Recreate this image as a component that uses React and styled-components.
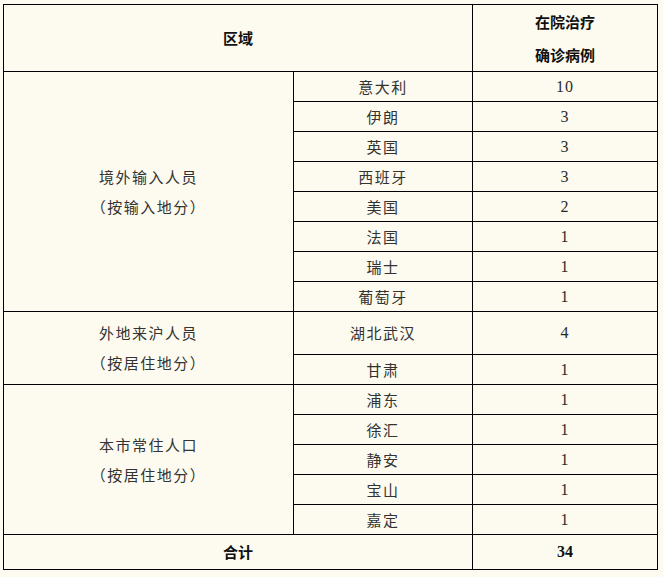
import React from 'react';
import styled, { createGlobalStyle } from 'styled-components';

const GlobalStyle = createGlobalStyle`
  html, body {
    margin: 0;
    padding: 0;
    background: #fdfbef;
  }
  body {
    font-family: "Noto Sans CJK SC", "Noto Sans", sans-serif;
    color: #333;
  }
`;

const groups = [
  {
    name: ['境外输入人员', '（按输入地分）'],
    rows: [
      ['意大利', 10],
      ['伊朗', 3],
      ['英国', 3],
      ['西班牙', 3],
      ['美国', 2],
      ['法国', 1],
      ['瑞士', 1],
      ['葡萄牙', 1],
    ],
  },
  {
    name: ['外地来沪人员', '（按居住地分）'],
    rows: [
      ['湖北武汉', 4, 43],
      ['甘肃', 1],
    ],
  },
  {
    name: ['本市常住人口', '（按居住地分）'],
    rows: [
      ['浦东', 1],
      ['徐汇', 1],
      ['静安', 1],
      ['宝山', 1],
      ['嘉定', 1],
    ],
  },
];

const App = () => {
  return (
    <>
      <GlobalStyle />
      <Wrap>
        <Table>
          <colgroup>
            <col style={{ width: 290 }} />
            <col style={{ width: 179 }} />
            <col style={{ width: 185 }} />
          </colgroup>
          <thead>
            <tr>
              <HeadCell colSpan={2} $h={67}>区域</HeadCell>
              <HeadCell $h={67}>
                <Lines $lh={33}>
                  <span>在院治疗</span>
                  <span>确诊病例</span>
                </Lines>
              </HeadCell>
            </tr>
          </thead>
          <tbody>
            {groups.map(g =>
              g.rows.map(([place, count, h], i) => (
                <tr key={place}>
                  {i === 0 && (
                    <Cell rowSpan={g.rows.length}>
                      <Lines $lh={30}>
                        <span>{g.name[0]}</span>
                        <span>{g.name[1]}</span>
                      </Lines>
                    </Cell>
                  )}
                  <Cell $h={h || 30}>{place}</Cell>
                  <Num $h={h || 30}>{count}</Num>
                </tr>
              ))
            )}
            <tr>
              <HeadCell colSpan={2} $h={35}>合计</HeadCell>
              <HeadNum $h={35}>34</HeadNum>
            </tr>
          </tbody>
        </Table>
      </Wrap>
    </>
  );
};

export default App;

// ------------------------ styles ------------------------

const Wrap = styled.div`
  padding: 4px 0 0 3px;
`;

const Table = styled.table`
  border-collapse: collapse;
  width: 654px;
  table-layout: fixed;
  border: 1px solid #000;
`;

const Cell = styled.td`
  border: 1px solid #000;
  height: ${p => (p.$h ? `${p.$h - 1}px` : 'auto')};
  padding: 0;
  text-align: center;
  vertical-align: middle;
  font-size: 15px;
  line-height: 20px;
  letter-spacing: 1.5px;
  color: #333;
`;

const Num = styled(Cell)`
  font-family: "Liberation Serif", serif;
  font-size: 16px;
  letter-spacing: 1px;
  color: #2a2a2a;
`;

const HeadCell = styled(Cell)`
  font-weight: bold;
  letter-spacing: 0;
  color: #111;
`;

const HeadNum = styled(HeadCell)`
  font-family: "Liberation Serif", serif;
  font-size: 16px;
`;

const Lines = styled.div`
  display: flex;
  flex-direction: column;
  align-items: center;
  line-height: ${p => p.$lh}px;
`;
